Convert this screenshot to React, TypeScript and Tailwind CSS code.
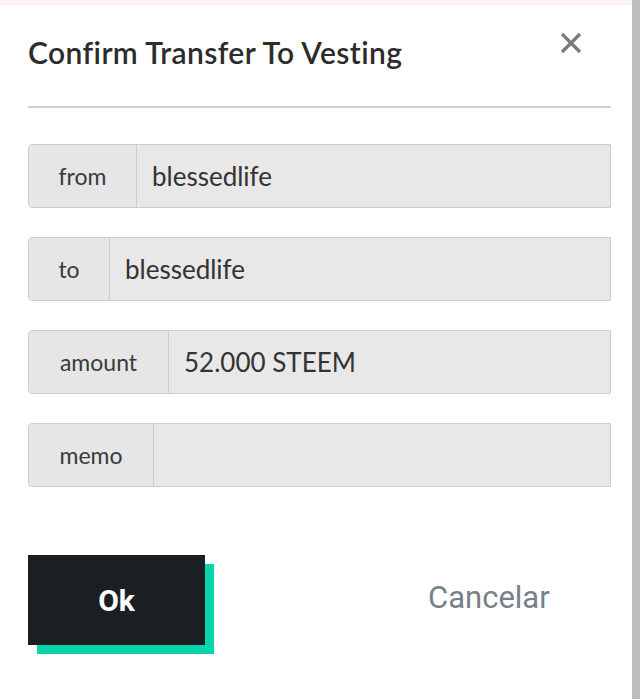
import React from 'react';

const fields = [
    { label: 'from', value: 'blessedlife', w: 'w-[108px]' },
    { label: 'to', value: 'blessedlife', w: 'w-[81px]' },
    { label: 'amount', value: '52.000 STEEM', w: 'w-[140px]' },
    { label: 'memo', value: '', w: 'w-[125px]' },
];

export default function App() {
    return (
        <div className="flex w-[640px] h-[699px] bg-white overflow-hidden font-['Lato','Open_Sans',sans-serif]">
            <div className="flex flex-col w-[632px]">
                <div className="h-[5px] bg-[#fcf0fa]" />
                <div className="flex flex-col pl-[28px] pr-[21px]">
                    {/* Header */}
                    <div className="flex items-start justify-between h-[103px] border-b-2 border-[#d0d0d0]">
                        <h2 className="mt-[29px] text-[30px] leading-[36px] font-semibold tracking-[0.4px] text-[#2c2c2c]">
                            Confirm Transfer To Vesting
                        </h2>
                        <button className="mt-[26px] mr-[28px] text-[#7b7b7b]">
                            <svg width="24" height="24" viewBox="0 0 24 24" fill="none" stroke="currentColor" strokeWidth="3.2" strokeLinecap="butt">
                                <path d="M3 3L21 21M21 3L3 21" />
                            </svg>
                        </button>
                    </div>

                    {/* Fields */}
                    <div className="flex flex-col gap-[29px] mt-[36px]">
                        {fields.map((f) => (
                            <div key={f.label} className="flex h-[64px] border border-[#cdcdcd] rounded-l-[4px] overflow-hidden bg-[#e8e8e8]">
                                <div className={`${f.w} shrink-0 flex items-center justify-center bg-[#e6e6e6] border-r border-[#cdcdcd] text-[23px] text-[#3a3a3a]`}>
                                    {f.label}
                                </div>
                                <div className="flex-1 flex items-center pl-[15px] text-[26px] text-[#333]">
                                    {f.value}
                                </div>
                            </div>
                        ))}
                    </div>

                    {/* Actions */}
                    <div className="flex items-center mt-[68px] font-['Roboto',sans-serif]">
                        <div className="relative w-[186px] h-[99px]">
                            <div className="absolute left-[9px] top-[9px] w-[177px] h-[90px] bg-[#09d3a8]" />
                            <button className="absolute left-0 top-0 w-[177px] h-[90px] bg-[#1a1f24] text-white text-[30px] font-bold">
                                Ok
                            </button>
                        </div>
                        <button className="ml-[214px] -mt-[12px] text-[31px] text-[#788187]">
                            Cancelar
                        </button>
                    </div>
                </div>
            </div>
            <div className="w-[8px] bg-[#bdbdbd]" />
        </div>
    );
}
